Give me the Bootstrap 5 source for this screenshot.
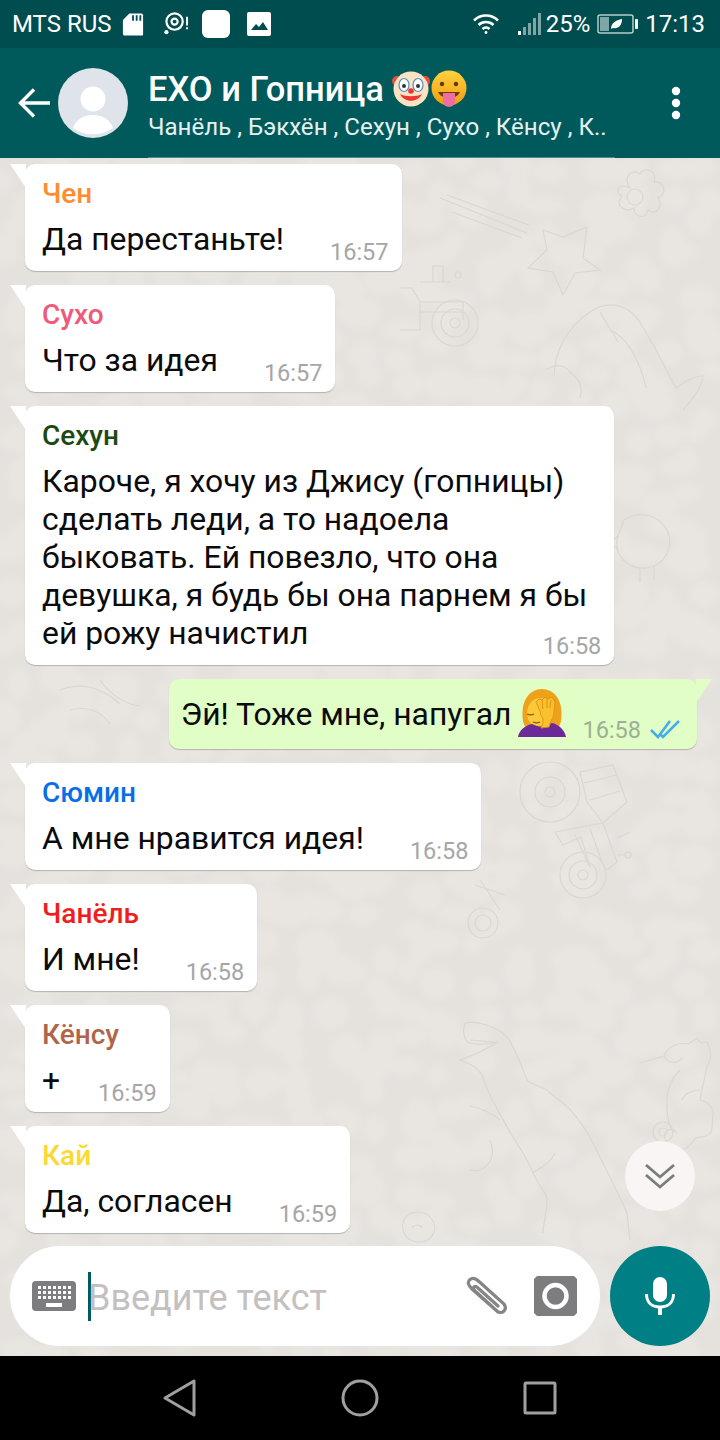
<!DOCTYPE html>
<html lang="ru">
<head>
    <meta charset="UTF-8">
    <meta name="viewport" content="width=device-width, initial-scale=1.0">
    <title>EXO и Гопница</title>
    <link rel="stylesheet" href="https://cdn.jsdelivr.net/npm/bootstrap@5.3.0/dist/css/bootstrap.min.css">
    <style>
        body { margin: 0; width: 720px; height: 1440px; overflow: hidden; font-family: Roboto, "Liberation Sans", sans-serif; }
        .phone { width: 720px; height: 1440px; }
        .status-bar { height: 48px; background: #004d4f; color: #fff; font-size: 24px; padding: 0 15px 0 12px; }
        .sd-icon { margin-left: 10px; }
        .target-icon { margin-left: 20px; }
        .white-square { width: 28px; height: 28px; border-radius: 6px; background: #fff; margin-left: 13px; }
        .pic-icon { margin-left: 17px; }
        .signal-icon { margin-left: 18px; }
        .battery-pct { margin-left: 4px; }
        .battery-icon { margin: 0 7px 0 7px; }
        .top-bar { height: 110px; background: #005a5c; color: #fff; }
        .back-arrow { margin-left: 18px; margin-right: 8px; }
        .top-text { margin-left: 20px; padding-top: 6px; }
        .more-dots { margin-right: 34px; }
        .top-line { height: 1px; margin-left: 148px; width: 467px; background: #4f8d8b; margin-top: -1px; position: relative; }
        .group-title { font-size: 34.500px; font-weight: 500; line-height: 38px; }
        .group-sub { font-size: 24.100px; line-height: 32px; margin-top: 3px; color: #e6f0ef; }
        .chat-area { height: 1198px; background: #e5e2de; overflow: hidden; }
        .wallpaper { position: absolute; inset: 0; width: 720px; height: 1198px; }
        .msg-list { padding-top: 6px; gap: 14px; z-index: 1; }
        .bubble { background: #fff; border-radius: 10px; padding: 15px 13px 13px 17px; margin-left: 25px; box-shadow: 0 1px 1px rgba(0,0,0,.22); }
        .bubble::before { content: ""; position: absolute; left: -15px; top: 0; width: 16px; height: 24px; background: #fff; clip-path: polygon(0 0, 100% 0, 100% 100%); }
        .bubble-long { padding-right: 27px; }
        .bubble-out { background: #e1fec6; align-self: flex-end; margin: 0 23px 0 0; padding: 16px 17px 16px 12px; height: 70px; }
        .bubble-out::before { left: auto; right: -15px; background: #e1fec6; clip-path: polygon(0 0, 100% 0, 0 100%); }
        .sender { font-size: 28px; font-weight: 500; line-height: 30px; margin-bottom: 11px; }
        .msg-text { font-size: 31.850px; line-height: 38px; color: #0b0b0b; white-space: nowrap; }
        .msg-time { font-size: 23.500px; line-height: 26px; color: #a6a6a6; white-space: nowrap; margin-left: 46px; margin-bottom: -7px; }
        .time-tight { margin-left: 38px; }
        .bubble-out .msg-time { margin-left: 16px; margin-bottom: -10px; color: #9eaf94; }
        .time-below { margin: -19px -14px 19px 0; text-align: right; height: 0; }
        .face-emoji { margin-left: 7px; margin-bottom: -4px; }
        .ticks { margin-left: 9px; margin-bottom: -6px; }
        .scroll-btn { position: absolute; right: 25px; bottom: 145px; width: 70px; height: 70px; border-radius: 50%; background: #f8f5f4; z-index: 2; }
        .composer { padding: 0 10px 10px; gap: 10px; z-index: 1; }
        .input-pill { width: 590px; height: 100px; border-radius: 50px; background: #fff; padding: 0 23px 0 22px; }
        .caret { width: 3px; height: 49px; background: #005a5c; margin: 0 -3px 0 12px; }
        .placeholder-text { font-size: 36px; color: #c4c0c0; line-height: 40px; padding-top: 4px; }
        .camera-icon { margin-left: 27px; }
        .mic-btn { width: 100px; height: 100px; border-radius: 50%; background: #007f84; }
        .nav-keys { height: 84px; background: #000; }
    </style>
</head>
<body>
<div class="phone d-flex flex-column">

    <!-- status bar -->
    <div class="status-bar d-flex align-items-center">
        <span>MTS RUS</span>
        <svg class="sd-icon" width="22" height="25" viewBox="0 0 24 26"><path d="M8 1h13a2 2 0 0 1 2 2v21a1 1 0 0 1-1 1H3a2 2 0 0 1-2-2V8z" fill="#fff"/><path d="M11 3h2v6h-2zM15 3h2v6h-2zM19 3h2v6h-2z" fill="#004d4f"/></svg>
        <svg class="target-icon" width="25" height="24" viewBox="0 0 26 25" fill="none" stroke="#fff"><circle cx="11" cy="10" r="8.500" stroke-width="2.300"/><circle cx="11" cy="10" r="3.200" stroke-width="2.300"/><circle cx="2.500" cy="21" r="2.200" fill="#fff" stroke="none"/><path d="M24 5v9M24 16v2" stroke-width="2"/></svg>
        <span class="white-square"></span>
        <svg class="pic-icon" width="24" height="24" viewBox="0 0 24 24"><rect width="24" height="24" rx="2" fill="#fff"/><path d="M4 18l5-6 3 3 4-5 5 8z" fill="#004d4f"/></svg>
        <svg class="ms-auto" width="28" height="22" viewBox="0 0 28 22" fill="none" stroke="#fff" stroke-width="2.600"><path d="M2 7.500a17 17 0 0 1 24 0M6.500 12a11 11 0 0 1 15 0"/><path d="M10.500 16a5 5 0 0 1 7 0"/><circle cx="14" cy="19.500" r="1.400" fill="#fff" stroke="none"/></svg>
        <svg class="signal-icon" width="24" height="26" viewBox="0 0 24 26"><rect x="0" y="20" width="3" height="4" fill="#fff"/><rect x="5" y="16" width="3" height="8" fill="#7fa6a6"/><rect x="10" y="12" width="3" height="12" fill="#7fa6a6"/><rect x="15" y="7" width="3" height="17" fill="#7fa6a6"/><rect x="20" y="2" width="3" height="22" fill="#7fa6a6"/></svg>
        <span class="battery-pct">25%</span>
        <svg class="battery-icon" width="41" height="22" viewBox="0 0 41 22"><rect x="1" y="2" width="35" height="18" rx="2" fill="none" stroke="#b7cdcd" stroke-width="1.500"/><rect x="3" y="4" width="9" height="14" fill="#7fa6a6"/><path d="M14 16c0-6 5-9 11-10 0 7-4 10-9 9z" fill="#fff"/><rect x="38" y="6" width="3" height="10" rx="1" fill="#fff"/></svg>
        <span>17:13</span>
    </div>

    <!-- toolbar -->
    <div class="top-bar d-flex align-items-center">
        <svg class="back-arrow" width="32" height="30" viewBox="0 0 32 30" fill="none" stroke="#fff" stroke-width="3.400"><path d="M32 15H3M16 1.500 2.500 15 16 28.500"/></svg>
        <svg width="70" height="70" viewBox="0 0 70 70"><circle cx="35" cy="35" r="35" fill="#dfe4ea"/><circle cx="35" cy="31" r="12.500" fill="#fff"/><path d="M15 60c3-9 11-13 20-13s17 4 20 13a35 35 0 0 1-40 0z" fill="#fff"/></svg>
        <div class="top-text flex-grow-1">
            <div class="group-title d-flex align-items-center">EXO и Гопница
                <svg class="ms-2" width="38" height="38" viewBox="0 0 38 38"><circle cx="5" cy="11" r="5" fill="#e8503a"/><circle cx="33" cy="11" r="5" fill="#e8503a"/><circle cx="19" cy="19" r="17.500" fill="#fbe3c2"/><ellipse cx="12" cy="15" rx="5" ry="6.500" fill="#fff" stroke="#4d8fd0" stroke-width="1.200"/><ellipse cx="26" cy="15" rx="5" ry="6.500" fill="#fff" stroke="#4d8fd0" stroke-width="1.200"/><circle cx="12" cy="16" r="2" fill="#333"/><circle cx="26" cy="16" r="2" fill="#333"/><circle cx="19" cy="21" r="2.800" fill="#e33"/><path d="M8 24c4 9 18 9 22 0-5 3-17 3-22 0z" fill="#e33"/></svg>
                <svg width="38" height="38" viewBox="0 0 38 38"><defs><linearGradient id="yel" x1="0" y1="0" x2="0" y2="1"><stop offset="0" stop-color="#fdd33d"/><stop offset="1" stop-color="#f39a12"/></linearGradient></defs><circle cx="19" cy="18" r="17.500" fill="url(#yel)"/><circle cx="12" cy="14" r="2.200" fill="#5b3a10"/><circle cx="26" cy="14" r="2.200" fill="#5b3a10"/><path d="M8 22h22c-2 4-6 6-11 6s-9-2-11-6z" fill="#6a3d10"/><path d="M13 23h12v8a6 6 0 0 1-12 0z" fill="#ec6fa0"/></svg>
            </div>
            <div class="group-sub">Чанёль , Бэкхён , Сехун , Сухо , Кёнсу , К..</div>
        </div>
        <svg class="more-dots" width="20" height="34" viewBox="0 0 20 34"><circle cx="10" cy="5" r="4.200" fill="#fff"/><circle cx="10" cy="17" r="4.200" fill="#fff"/><circle cx="10" cy="29" r="4.200" fill="#fff"/></svg>
    </div>
    <div class="top-line"></div>

    <!-- messages -->
    <div class="chat-area position-relative d-flex flex-column">
        <svg class="wallpaper" viewBox="0 0 720 1198">
            <defs><filter id="soft"><feGaussianBlur stdDeviation="3"/></filter></defs>
            <g id="stones" fill="#e9e6e2" filter="url(#soft)"></g>
            <!-- doodles, coordinates taken from the whole screen -->
            <g transform="translate(0,-158)" fill="none" stroke="#dad6d1" stroke-width="1.200">
                <!-- comet star -->
                <path d="M543 230l20 7 24-10-4 31 17 12-25 3-12 22-10-23-25-4 19-18zM440 198l87 35M447 195l82 30M452 212l70 26"/>
                <!-- flower -->
                <circle cx="635" cy="197" r="8"/><path d="M630 188c-8-12 2-20 10-14 4-8 18-4 14 8 10-2 14 12 4 16 6 8-2 18-10 12-2 10-14 8-14-2-10 6-20-4-12-12-8-4-4-14 8-8z"/>
                <!-- tractor -->
                <circle cx="455" cy="323" r="23"/><circle cx="455" cy="323" r="14"/><circle cx="455" cy="323" r="5"/>
                <path d="M400 288h12l8 14h43v18M420 302v28h-20M420 312h43M433 282v-16h10v16M420 282h30"/><circle cx="458" cy="275" r="3"/>
                <!-- fish -->
                <path d="M590 312c20-14 42-6 52 14 14 22 22 40 34 62 8-6 18-12 27-12-2 14-10 22-20 34M590 312c-22 14-36 40-36 64M546 370c8-6 18-6 24 2M570 372c8 6 14 14 10 26M610 330c16 6 30 30 36 58M600 312l18 30"/>
                <!-- hen -->
                <path d="M624 520c14-10 36-6 44 12 6 16-4 34-22 36-18 2-34-14-28-32zM618 536l-10 8 10 4M640 568v14M654 566v14"/>
                <!-- rotated machine -->
                <circle cx="550" cy="792" r="30"/><circle cx="550" cy="792" r="15"/><circle cx="550" cy="792" r="5"/>
                <circle cx="583" cy="875" r="23"/><circle cx="583" cy="875" r="14"/><circle cx="583" cy="875" r="5"/>
                <path d="M580 772l33-7 14 37-24 21-16-21zM584 783l33-8M590 800l30-9M555 832l48-9 14 39-10 8M555 832l8 13 18-8 9 30M575 835l14 30M590 829l14 38M617 838l13-6M617 855h8"/><circle cx="628" cy="855" r="3"/>
                <circle cx="483" cy="923" r="15"/><circle cx="483" cy="923" r="8"/><path d="M480 880l20 30M475 885l30 10"/>
                <!-- dinosaur -->
                <path d="M465 1023c12-2 30 2 42 14 8 10 13 26 20 43 6 6 14 6 20 10 10 10 20 14 26 23 12 14 20 28 27 44 10 20 20 40 27 56l3 27"/>
                <path d="M465 1023c-2 6-2 14 2 19 10 4 20 2 30 0-8 6-20 12-37 18 8 4 16 4 23 17 4 18 16 34 24 50 10 18 20 30 26 46 6 14 14 20 14 27 0 14-4 24-4 33M470 1040l24 2M470 1106c10 2 20 6 30 14M490 1140c8 20-6 34-20 30M533 1173c8-6 16-8 22-20"/>
                <!-- seahorse -->
                <path d="M640 1063l24-7c4-10 14-14 24-12l9-6 4 5 6-1c4 8 6 16 0 24-2 12-6 26-7 34 8 2 14 8 13 14-1 8 0 18-3 19-4 6-12 2-15 6-6 8-10 12-18 10-8-2-14-10-12-16 4-6 10-4 12 1M664 1056c4 8 14 8 18 2M680 1070c-10 10-14 24-13 37 0 10 2 18 6 26M700 1090c-8 0-16 4-18 10"/>
                <circle cx="663" cy="1132" r="10"/><circle cx="663" cy="1132" r="4"/>
                <!-- small flowers, leaves -->
                <path d="M405 1218c6-8 20-8 26 0 8 10 2 24-12 24s-20-14-14-24zM412 1228c2-4 8-4 10 0"/>
                <path d="M60 690c20-8 40-4 60 14M70 710c16-4 30 0 40 14M100 680c10 14 24 24 40 26"/>
            </g>
        </svg>

        <div class="msg-list position-relative d-flex flex-column align-items-start">
            <div class="bubble position-relative">
                <div class="sender" style="color:#ff8c2e">Чен</div>
                <div class="d-flex align-items-end"><div class="msg-text">Да перестаньте!</div><div class="msg-time">16:57</div></div>
            </div>
            <div class="bubble position-relative">
                <div class="sender" style="color:#f0597a">Сухо</div>
                <div class="d-flex align-items-end"><div class="msg-text">Что за идея</div><div class="msg-time">16:57</div></div>
            </div>
            <div class="bubble bubble-long position-relative">
                <div class="sender" style="color:#1c4a12">Сехун</div>
                <div class="msg-text">Кароче, я хочу из Джису (гопницы)<br>сделать леди, а то надоела<br>быковать. Ей повезло, что она<br>девушка, я будь бы она парнем я бы<br>ей рожу начистил</div>
                <div class="msg-time time-below">16:58</div>
            </div>
            <div class="bubble bubble-out position-relative d-flex align-items-end">
                <div class="msg-text">Эй! Тоже мне, напугал</div>
                <svg class="face-emoji" width="48" height="49" viewBox="0 0 48 49">
                    <path d="M5 33C2 12 12 1 24 1s22 11 19 32c-1 5-3 7-6 7H11c-3 0-5-2-6-7z" fill="#eea21c"/>
                    <ellipse cx="22" cy="25" rx="13" ry="15" fill="#fcc93a"/>
                    <path d="M0 49c1-7 8-12 14-13 6 3 10 3 14 1l6-2c6 1 13 7 14 14z" fill="#6c2a98"/>
                    <path d="M9 26c2 1 5 1 7 0M15 34c2 1 5 1 7 0" fill="none" stroke="#8a5a10" stroke-width="1.300"/>
                    <path d="M18 14l3-3 3 1 3-3 3 2 4-2 3 5-1 9c0 4-1 7-3 10l-2 6-8 1c2-4 3-8 1-11-2-2-1-5-3-8-1-3-2-5-3-7z" fill="#fbc02d" stroke="#db9014" stroke-width=".9"/>
                    <path d="M24 12l1 9M29 11l0 9M33 12l-1 8" stroke="#db9014" stroke-width=".9" fill="none"/>
                </svg>
                <div class="msg-time">16:58</div>
                <svg class="ticks" width="30" height="20" viewBox="0 0 30 20" fill="none" stroke="#45aee8" stroke-width="2.600"><path d="M1 11l7 7L20 2M11 16l2 2L29 2"/></svg>
            </div>
            <div class="bubble position-relative">
                <div class="sender" style="color:#0a6ee6">Сюмин</div>
                <div class="d-flex align-items-end"><div class="msg-text">А мне нравится идея!</div><div class="msg-time">16:58</div></div>
            </div>
            <div class="bubble position-relative">
                <div class="sender" style="color:#f01d1d">Чанёль</div>
                <div class="d-flex align-items-end"><div class="msg-text">И мне!</div><div class="msg-time">16:58</div></div>
            </div>
            <div class="bubble position-relative">
                <div class="sender" style="color:#b0654a">Кёнсу</div>
                <div class="d-flex align-items-end"><div class="msg-text">+</div><div class="msg-time time-tight">16:59</div></div>
            </div>
            <div class="bubble position-relative">
                <div class="sender" style="color:#fdd835">Кай</div>
                <div class="d-flex align-items-end"><div class="msg-text">Да, согласен</div><div class="msg-time">16:59</div></div>
            </div>
        </div>

        <div class="scroll-btn d-flex align-items-center justify-content-center">
            <svg width="32" height="28" viewBox="0 0 32 28" fill="none" stroke="#7c7c7c" stroke-width="2.800"><path d="M2 3l14 12L30 3M2 13l14 12 14-12"/></svg>
        </div>

        <div class="composer position-relative d-flex mt-auto">
            <div class="input-pill d-flex align-items-center">
                <svg width="44" height="30" viewBox="0 0 44 30"><rect width="44" height="30" rx="4" fill="#7d7d80"/><path d="M6 5h3v3H6zM11 5h3v3h-3zM16 5h3v3h-3zM21 5h3v3h-3zM26 5h3v3h-3zM31 5h3v3h-3zM36 5h3v3h-3zM6 10h3v3H6zM11 10h3v3h-3zM16 10h3v3h-3zM21 10h3v3h-3zM26 10h3v3h-3zM31 10h3v3h-3zM36 10h3v3h-3zM6 15h3v3H6zM11 15h3v3h-3zM16 15h3v3h-3zM21 15h3v3h-3zM26 15h3v3h-3zM31 15h3v3h-3zM36 15h3v3h-3zM14 22h16v4H14z" fill="#fff"/></svg>
                <span class="caret"></span>
                <span class="placeholder-text flex-grow-1">Введите текст</span>
                <svg width="44" height="40" viewBox="0 0 44 40" fill="none" stroke="#858585" stroke-width="3.200" stroke-linecap="round"><path d="M35 36 9 13C5 9 4 6 7 3.500s6-1 9 2L41 28c2 3 2 5 0 7s-5 2-7 0L12 15c-2-2-2-3-1-4s2-1 4 1l20 18"/></svg>
                <svg class="camera-icon" width="43" height="40" viewBox="0 0 43 40"><path d="M3 0h37l3 3v34l-3 3H3l-3-3V3z" fill="#7d7d80"/><circle cx="21.500" cy="20" r="11" fill="#7d7d80" stroke="#fff" stroke-width="4.500"/></svg>
            </div>
            <div class="mic-btn d-flex align-items-center justify-content-center">
                <svg width="30" height="38" viewBox="0 0 30 38"><rect x="8" y="0" width="14" height="25" rx="7" fill="#fff"/><path d="M1.500 17c0 9 6 13 13.500 13s13.500-4 13.500-13" fill="none" stroke="#fff" stroke-width="3"/><rect x="13" y="29" width="4" height="9" fill="#fff"/></svg>
            </div>
        </div>
    </div>

    <!-- nav keys -->
    <div class="nav-keys d-flex align-items-center justify-content-center">
        <svg width="400" height="40" viewBox="0 0 400 40" fill="none" stroke="#a0a0a0" stroke-width="3" stroke-linejoin="round"><path d="M34 3v34L5 20z"/><circle cx="200" cy="20" r="17"/><rect x="365" y="5" width="30" height="30" rx="1"/></svg>
    </div>
</div>

<script>
    // неровная "галька" на фоне чата
    const stones = document.getElementById("stones");
    let seed = 7;
    const rnd = () => (seed = (seed * 16807) % 2147483647) / 2147483647;
    let html = "";
    for (let y = 0; y < 1198; y += 30) {
        for (let x = 0; x < 720; x += 36) {
            const cx = x + rnd() * 30, cy = y + rnd() * 26;
            html += `<ellipse cx="${cx.toFixed(1)}" cy="${cy.toFixed(1)}" rx="${(10 + rnd() * 12).toFixed(1)}" ry="${(8 + rnd() * 10).toFixed(1)}"/>`;
        }
    }
    stones.innerHTML = html;
</script>
</body>
</html>
